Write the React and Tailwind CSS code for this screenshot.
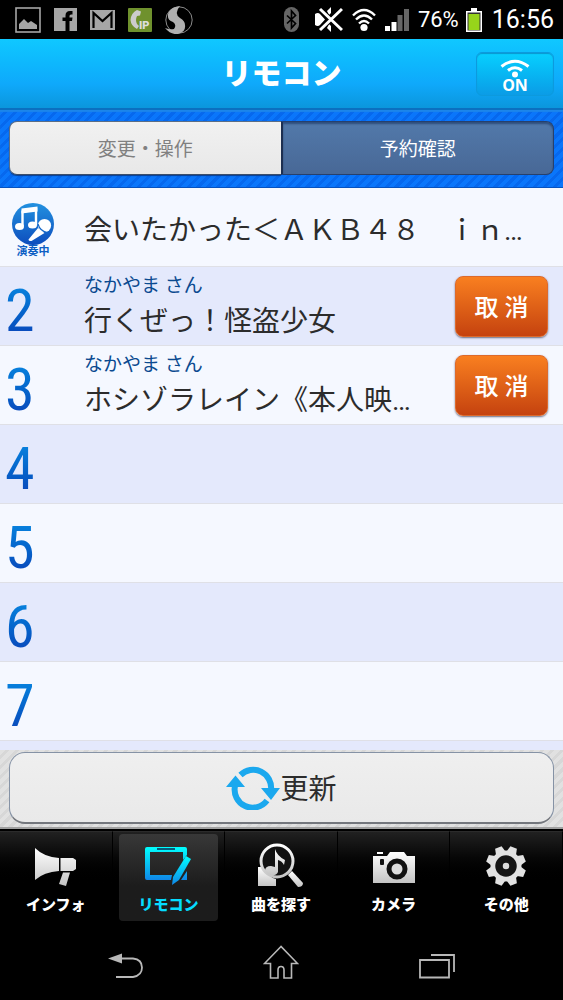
import React from "react";

const JP = "font-['Roboto','Noto_Sans_CJK_JP',sans-serif]";

function StatusBar() {
  return (
    <div className="flex h-[39px] shrink-0 items-center justify-between bg-black pr-[9px] pl-[15px] text-white">
      <div className="flex items-center gap-[13px]">
        <svg width="26" height="26" viewBox="0 0 26 26" aria-label="画像">
          <rect x="1" y="1" width="24" height="24" fill="none" stroke="#a6a6a6" strokeWidth="1.600" />
          <path d="M4 22v-5l5-5 4 4 3-2 6 4v4z" fill="#a6a6a6" />
        </svg>
        <svg width="23" height="23" viewBox="0 0 23 23" aria-label="Facebook">
          <rect width="23" height="23" fill="#a6a6a6" />
          <path fill="#000" d="M11.500 23V13H8.500V9.500h3V7.500Q11.500 3 16 3h2.500v3.500H17q-1.500 0-1.500 1.500v1.500h3L18 13h-2.500v10z" />
        </svg>
        <svg width="25" height="20" viewBox="0 0 25 20" aria-label="Gmail">
          <rect width="25" height="20" fill="#a6a6a6" />
          <path d="M3.500 18V3l9 8 9-8v15" fill="none" stroke="#000" strokeWidth="2.200" />
        </svg>
        <svg width="24" height="24" viewBox="0 0 24 24" aria-label="IP電話">
          <rect width="24" height="24" rx="1" fill="#6f912d" />
          <path d="M9 2l4 1.500-1 4-3 .5q-2 4 0 8l2 2-2 3q-6-3-6.500-9Q3 5 9 2z" fill="#ccc" />
          <text x="11" y="21" fontSize="11" fontWeight="900" fill="#ddd" className="font-['Roboto',sans-serif]">IP</text>
        </svg>
        <svg width="28" height="28" viewBox="0 0 28 28" aria-label="S">
          <circle cx="14" cy="14" r="13.200" fill="none" stroke="#8a8a8a" strokeWidth="1" />
          <path d="M15 0Q5 1 3 8q-1 6 5 8 4 3 1 7-4 1-9-1 6 7 13 6 8-2 7-9 0-4-5-7-4-3-3-6Q13 2 15 0z" fill="#b0b0b0" />
        </svg>
      </div>
      <div className={"flex items-center " + JP}>
        <svg width="15" height="25" viewBox="0 0 15 25" aria-label="Bluetooth">
          <rect width="15" height="25" rx="7.500" fill="#666" />
          <path d="M3 8.500l8.500 8L7.500 21V4l4 4.500L3 16.500" fill="none" stroke="#000" strokeWidth="1.700" />
        </svg>
        <svg className="ml-4" width="28" height="27" viewBox="0 0 28 27" aria-label="消音">
          <path d="M0 8q3-2 5 0l5 5.500L5 19q-2 2-5 0zM12 5l4-4v6l-2 2zM12 22l4 4v-6l-2-2z" fill="#fff" />
          <path d="M5 3l22 21M27 3l-22 21" stroke="#000" strokeWidth="4.500" />
          <path d="M5 3l22 21M27 3l-22 21" stroke="#fff" strokeWidth="3" />
        </svg>
        <svg className="ml-2" width="26" height="25" viewBox="0 0 26 25" aria-label="Wi-Fi">
          <g fill="none" stroke="#fff" strokeWidth="2.400">
            <path d="M2 8.500q11-11 22 0M5 12.500q8-8 16 0M8 16.500q5-5 10 0" />
          </g>
          <circle cx="13" cy="20.500" r="3.600" fill="#fff" />
        </svg>
        <svg className="ml-2" width="24" height="22" viewBox="0 0 24 22" aria-label="電波">
          <path d="M0 17h5v5H0zM6.500 13h5v9h-5z" fill="#fff" />
          <path d="M12.500 6h5v16h-5zM19 0h5v22h-5z" fill="#666" />
        </svg>
        <span className="ml-[9px] text-[22px] leading-none">76%</span>
        <svg className="ml-[7px]" width="16" height="24" viewBox="0 0 16 24" aria-label="電池">
          <path d="M5 0h6v3h5v21H0V3h5z" fill="#fff" />
          <path d="M1.500 4.500h13v18h-13z" fill="#333" />
          <path d="M2.500 6h11v16h-11z" fill="#97d41b" />
        </svg>
        <span className="ml-[10px] text-[25px] leading-none">16:56</span>
      </div>
    </div>
  );
}

function Header() {
  return (
    <header className="grid h-[71px] shrink-0 grid-cols-[1fr_auto_1fr] items-center border-b-2 border-[#0b6fc0] bg-linear-to-b from-[#10c8ff] via-[#0fa9fb] via-65% to-[#0b96dc] px-[9px]">
      <h1 className="col-start-2 text-[30px] leading-none font-black text-white">リモコン</h1>
      <button className="flex h-[44px] w-[78px] flex-col items-center justify-center justify-self-end rounded-md border border-[#0c9ade] bg-linear-to-b from-[#08d0ff] to-[#0b9ce6] pt-1 shadow-[inset_0_1px_1px_#0a96cf]">
        <svg width="30" height="19" viewBox="0 0 30 19" aria-hidden="true">
          <path d="M1.500 7.500q13.500-10.500 27 0M8 11.500q7-5.500 14 0" fill="none" stroke="#fff" strokeWidth="3" />
          <circle cx="15" cy="15.500" r="3" fill="#fff" />
        </svg>
        <span className="font-['Open_Sans',sans-serif] text-[16px] leading-[14px] font-bold text-white">ON</span>
      </button>
    </header>
  );
}

function Tabs() {
  return (
    <div className="flex shrink-0 border-b border-[#0653c0] bg-[repeating-linear-gradient(135deg,#0a76fb_0_4px,#0668ee_4px_7px)] px-[9px] pt-[11px] pb-3 shadow-[inset_0_2px_1px_#1c86ea]">
      <button className="h-[54px] flex-1 rounded-l-lg border border-r-0 border-[#5b6e86] border-b-[#3c4f6b] bg-linear-to-b from-[#f1f1f1] to-[#e8e8e8] pt-1 text-[19px] text-[#808080] shadow-[0_1px_1px_#0a3f90]">
        変更・操作
      </button>
      <button className="h-[54px] flex-1 rounded-r-lg border border-l-2 border-[#27406c] border-l-[#1d2f50] bg-linear-to-b from-[#5279aa] to-[#486896] pt-1 text-[19px] text-white shadow-[inset_0_2px_2px_#2e4d7c]">
        予約確認
      </button>
    </div>
  );
}

function NowPlaying() {
  return (
    <div className="flex w-[66px] flex-col items-center pt-2">
      <svg width="42" height="42" viewBox="0 0 42 42" aria-hidden="true">
        <defs>
          <linearGradient id="disc" x1="0" y1="0" x2="0" y2="1">
            <stop offset="0" stopColor="#2291e0" />
            <stop offset="1" stopColor="#0d4dbd" />
          </linearGradient>
        </defs>
        <circle cx="21" cy="21" r="21" fill="url(#disc)" />
        <path d="M10.500 23V8.500L24 6.500V22" fill="none" stroke="#fff" strokeWidth="2.400" />
        <path d="M9.500 5.500l16-2v5l-16 2z" fill="#fff" />
        <ellipse cx="7.500" cy="23.500" rx="4.500" ry="3.600" fill="#fff" />
        <ellipse cx="20.500" cy="22" rx="4.500" ry="3.600" fill="#fff" />
        <path d="M26 25l-9.500 11.500q0 2 3 1.500l13-8z" fill="#fff" />
        <circle cx="32.500" cy="22.500" r="6.600" fill="#fff" />
        <path d="M26 21q2 7 9 8.500" stroke="#1568c8" strokeWidth="1.200" fill="none" />
      </svg>
      <span className="text-[11px] leading-[14px] font-bold text-[#0d5fc4]">演奏中</span>
    </div>
  );
}

const songs = [
  { title: "会いたかった＜ＡＫＢ４８　ｉｎ…", playing: true },
  { no: 2, singer: "なかやま さん", title: "行くぜっ！怪盗少女" },
  { no: 3, singer: "なかやま さん", title: "ホシゾラレイン《本人映…" },
  { no: 4 },
  { no: 5 },
  { no: 6 },
  { no: 7 },
  {},
];

function Row({ song }) {
  return (
    <li className="flex h-[79px] items-center border-b border-[#dfe0e6] pr-[15px] odd:bg-[#f5f8ff] even:bg-[#e4e9fc]">
      <div className="w-[84px] shrink-0">
        {song.playing && <NowPlaying />}
        {song.no && (
          <span className="ml-[5px] block w-fit bg-linear-to-b from-[#0a86e0] from-20% to-[#0a49bb] to-85% bg-clip-text pt-2 font-['Roboto_Condensed','Roboto',sans-serif] text-[60px] leading-[71px] text-transparent">
            {song.no}
          </span>
        )}
      </div>
      <div className="min-w-0 flex-1 pt-1 whitespace-nowrap">
        {song.singer && <p className="text-[19px] leading-6 text-[#0b4a90]">{song.singer}</p>}
        {song.title && <p className="pt-1 text-[28px] leading-10 text-[#2c2c2c]">{song.title}</p>}
      </div>
      {song.singer && (
        <button className="h-[61px] w-[93px] shrink-0 rounded-lg border border-[#dd6a2c] bg-linear-to-b from-[#f97f20] to-[#c5420f] pt-1 text-[24px] font-medium text-white shadow-[0_1px_2px_#6a6a80]">
          取 消
        </button>
      )}
    </li>
  );
}

function RefreshBar() {
  return (
    <div className="shrink-0 border-b-2 border-[#a0a0a0] bg-[repeating-linear-gradient(135deg,#e1e1e1_0_4px,#d7d7d7_4px_7px)] px-[9px] pt-[2px] pb-[3px]">
      <button className="flex h-[72px] w-full items-center justify-center rounded-2xl border border-b-2 border-[#8592a5] border-b-[#73767c] bg-linear-to-b from-[#efefef] to-[#e9e9e9] text-[28px] text-[#2c2c2c]">
        <svg width="54" height="44" viewBox="0 0 54 44" aria-hidden="true">
          <g fill="none" stroke="#1ba8ee" strokeWidth="6">
            <path d="M14.500 9A18 18 0 0 1 45 24" />
            <path d="M41 34.500A18 18 0 0 1 9 20" />
          </g>
          <path d="M0 21L9.500 9.500 19 21zM35 22h19L45 34z" fill="#1ba8ee" />
        </svg>
        <span className="pt-1">更新</span>
      </button>
    </div>
  );
}

function MegaphoneIcon() {
  return (
    <svg width="44" height="42" viewBox="0 0 44 42" aria-hidden="true">
      <path d="M1 3q9 9 24 10v13Q10 27 1 35zM26.500 13H39l3 2v9l-3 2H26.500zM29 27.500h7L32 41l-7-2z" fill="url(#silver)" />
    </svg>
  );
}

function TabletIcon() {
  return (
    <svg width="48" height="42" viewBox="0 0 48 42" aria-hidden="true">
      <path fillRule="evenodd" d="M3 2h38q2 0 2 2v6l-4 5V7H6v23h22l-1 5H3q-2 0-2-2V4q0-2 2-2zM43 26v9h-6z" fill="url(#aqua)" />
      <path d="M13 4h18" stroke="#075b78" strokeWidth="2" />
      <path d="M42 11l5 3-12 21-7 5 1-8z" fill="url(#aqua)" />
    </svg>
  );
}

function SongSearchIcon() {
  return (
    <svg width="48" height="46" viewBox="0 0 48 46" aria-hidden="true">
      <path d="M1 43V24h5q5 10 13 12v7z" fill="url(#silver)" />
      <circle cx="20" cy="18" r="16" fill="#111" stroke="url(#silver)" strokeWidth="3" />
      <path d="M8 28q0-5 6-5l4 1V6q2 7 10 11l-1 5q-2-4-6-5v12q-2 4-7 3-4-1-6-4z" fill="url(#silver)" />
      <path d="M31 32l4-4 11 12q0 4-5 4z" fill="url(#silver)" />
    </svg>
  );
}

function CameraIcon() {
  return (
    <svg width="44" height="42" viewBox="0 0 44 42" aria-hidden="true">
      <path d="M5 7h6v2H5zM1 11h14l3-4h14l3 4h8v27H1z" fill="url(#silver)" />
      <rect x="8" y="14" width="4" height="6" rx="1" fill="#111" />
      <circle cx="25" cy="24" r="8" fill="#ddd" stroke="#111" strokeWidth="5" />
    </svg>
  );
}

function GearIcon() {
  return (
    <svg width="42" height="42" viewBox="-21 -21 42 42" aria-hidden="true">
      <g fill="#e2e2e2">
        <circle r="15.500" />
        <path id="cog" d="M-5-14L-3.500-20h7L5-14v28l-1.500 6h-7L-5 14z" transform="rotate(22.500)" />
        <use href="#cog" transform="rotate(45)" />
        <use href="#cog" transform="rotate(90)" />
        <use href="#cog" transform="rotate(135)" />
      </g>
      <circle r="7" fill="#ddd" stroke="#151515" strokeWidth="7.500" />
    </svg>
  );
}

const menu = [
  { label: "インフォ", Icon: MegaphoneIcon },
  { label: "リモコン", Icon: TabletIcon, active: true },
  { label: "曲を探す", Icon: SongSearchIcon },
  { label: "カメラ", Icon: CameraIcon },
  { label: "その他", Icon: GearIcon },
];

function Menu() {
  return (
    <nav className="grid h-[101px] shrink-0 grid-cols-5 border-t-2 border-black bg-black">
      <svg className="absolute size-0" aria-hidden="true">
        <defs>
          <linearGradient id="silver" x1="0" y1="0" x2="0" y2="1">
            <stop offset="0" stopColor="#fff" />
            <stop offset="1" stopColor="#c4c4c4" />
          </linearGradient>
          <linearGradient id="aqua" x1="0" y1="0" x2="0" y2="1">
            <stop offset="0" stopColor="#0ff" />
            <stop offset="1" stopColor="#0f87e8" />
          </linearGradient>
        </defs>
      </svg>
      {menu.map(({ label, Icon, active }) => (
        <div key={label} className="border-t border-r border-t-[#2b2b2b] border-r-black bg-linear-to-b from-[#212121] to-black to-55% px-[6px] pt-[2px]">
          <a
            href="#"
            className={
              active
                ? "flex h-[87px] flex-col items-center rounded-sm bg-linear-to-b from-[#383838] to-[#1c1c1c] to-60% text-[#05dcff]"
                : "flex h-[87px] flex-col items-center text-white"
            }
          >
            <span className="flex h-[63px] items-center justify-center">
              <Icon />
            </span>
            <span className="text-[15px] leading-4 font-black whitespace-nowrap">{label}</span>
          </a>
        </div>
      ))}
    </nav>
  );
}

function SystemNav() {
  return (
    <div className="grid h-[70px] shrink-0 grid-cols-3 justify-items-center bg-black px-12 pt-[14px]">
      <button aria-label="戻る" className="h-9">
        <svg width="36" height="36" viewBox="0 0 36 36" fill="none" stroke="#b8b8b8" strokeWidth="1.800">
          <path d="M13 14.500h12q9 1 9 9t-9 9.500H8" />
          <path d="M0 14.500l14-5v10z" fill="#b8b8b8" stroke="none" />
        </svg>
      </button>
      <button aria-label="ホーム" className="h-9">
        <svg width="36" height="36" viewBox="0 0 36 36" fill="none" stroke="#b8b8b8" strokeWidth="1.600">
          <path d="M18 2.500L1.500 19.500H7.500V34H15v-8q0-3.500 3-3.500t3 3.500v8h7.500V19.500h6z" />
        </svg>
      </button>
      <button aria-label="最近使ったアプリ" className="h-9">
        <svg width="36" height="36" viewBox="0 0 36 36" fill="none" stroke="#b8b8b8" strokeWidth="1.800">
          <path d="M1 16h29v17.500H1zM12 11h23v17" />
        </svg>
      </button>
    </div>
  );
}

export default function App() {
  return (
    <div lang="ja" className={"flex h-screen flex-col bg-black " + JP}>
      <StatusBar />
      <Header />
      <Tabs />
      <ul className="min-h-0 flex-1 overflow-y-auto bg-[#f5f8ff] [scrollbar-width:none]">
        {songs.map((song, i) => (
          <Row key={i} song={song} />
        ))}
      </ul>
      <RefreshBar />
      <Menu />
      <SystemNav />
    </div>
  );
}
